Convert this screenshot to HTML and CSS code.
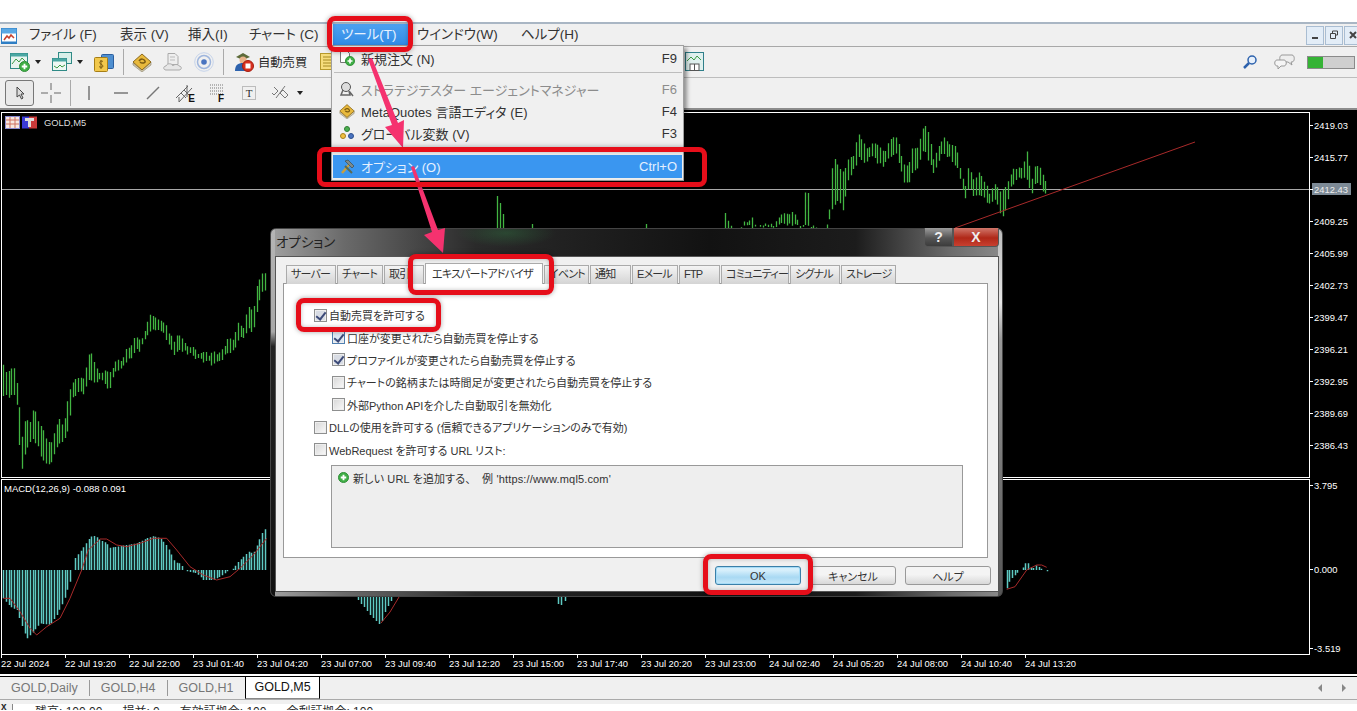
FILE: index.html

```html
<!DOCTYPE html>
<html lang="ja">
<head>
    <meta charset="UTF-8">
    <meta name="viewport" content="width=device-width, initial-scale=1.0">
    <title>MetaTrader オプション</title>
    <link rel="stylesheet" href="styles.css">
</head>
<body>
    <svg class="icon-defs" width="0" height="0">
        <symbol id="i-book" viewBox="0 0 20 20">
            <path d="M1 11l9 7 9-8v3l-9 7-9-7z" fill="#cfc7ad" stroke="#8a8268" stroke-width=".6"/>
            <path d="M1 10 10 2l9 8-9 8z" fill="#e8b93c" stroke="#8d6a1c"/>
            <path d="M7 9c2-3 5-2 6 0s-3 3-5 1" fill="none" stroke="#7a5a10" stroke-width="1.5"/>
        </symbol>
        <symbol id="i-plus" viewBox="0 0 12 12">
            <circle cx="6" cy="6" r="5.5" fill="#3fae45" stroke="#2b8a33"/>
            <path d="M6 3v6M3 6h6" stroke="#fff" stroke-width="2"/>
        </symbol>
    </svg>

    <div class="top-gap"></div>

    <nav class="menubar">
        <svg class="app-icon" width="17" height="17" viewBox="0 0 17 17">
            <rect x=".5" y=".5" width="15" height="15" fill="#fff" stroke="#2f7fc4"/>
            <rect x=".5" y=".5" width="15" height="5" fill="#5aa8e4"/>
            <rect x=".5" y="13.500" width="15" height="2" fill="#2f7fc4"/>
            <path d="M3 12l3-4 2 2 2-3 3 3" fill="none" stroke="#c8402c" stroke-width="1.5"/>
        </svg>
        <a class="menu-item">ファイル (F)</a>
        <a class="menu-item">表示 (V)</a>
        <a class="menu-item">挿入(I)</a>
        <a class="menu-item">チャート (C)</a>
        <a class="menu-item menu-item-active">ツール(T)</a>
        <a class="menu-item">ウインドウ(W)</a>
        <a class="menu-item">ヘルプ(H)</a>
        <div class="mdi-buttons">
            <span class="mdi-btn"><svg width="10" height="10" viewBox="0 0 10 10"><path d="M2 8h6" stroke="#444" stroke-width="2"/></svg></span>
            <span class="mdi-btn"><svg width="10" height="10" viewBox="0 0 10 10"><path d="M3.5 3V1h5v4H7M1.5 3.5h5v5h-5z" fill="none" stroke="#444"/></svg></span>
            <span class="mdi-btn"><svg width="10" height="10" viewBox="0 0 10 10"><path d="M2 2l6 6M8 2 2 8" stroke="#444" stroke-width="2"/></svg></span>
        </div>
    </nav>

    <div class="toolbar toolbar-top">
        <div class="tool-group">
            <div class="tool-drop">
                <svg width="20" height="20" viewBox="0 0 20 20">
                    <rect x=".5" y="1.5" width="17" height="15" fill="#e8f4f0" stroke="#2f8a86"/>
                    <rect x=".5" y="1.5" width="17" height="3" fill="#4aa7a3"/>
                    <path d="M2 12l4-5 3 3 3-4 4 4" fill="none" stroke="#3d9b45"/>
                    <use href="#i-plus" x="9" y="9" width="11" height="11"/>
                </svg>
                <i class="caret"></i>
            </div>
            <div class="tool-drop">
                <svg width="20" height="20" viewBox="0 0 20 20">
                    <rect x="6.5" y=".5" width="13" height="11" fill="#d8efe9" stroke="#2f8a86"/>
                    <rect x=".5" y="6.5" width="14" height="12" fill="#eef8f4" stroke="#2f8a86"/>
                    <rect x=".5" y="6.5" width="14" height="3" fill="#4aa7a3"/>
                    <path d="M2 14l3 2 3-3 2 2 3-2" fill="none" stroke="#3d9b45"/>
                </svg>
                <i class="caret"></i>
            </div>
            <svg width="20" height="20" viewBox="0 0 20 20">
                <rect x="7.5" y="2.5" width="12" height="14" rx="1" fill="#4f8fd0" stroke="#2c5f9e"/>
                <rect x=".5" y="5.5" width="13" height="14" rx="1" fill="#f2c84b" stroke="#a67e16"/>
                <path d="M9 9.500c-2-1-4 0-3 2 1 1 3 1 3 3-1 1-3 1-4 0M7 8v9" fill="none" stroke="#7a5a10"/>
            </svg>
        </div>
        <span class="tool-sep"></span>
        <div class="tool-group">
            <svg width="20" height="20"><use href="#i-book"/></svg>
            <svg width="20" height="20" viewBox="0 0 20 20">
                <path d="M5 1.500h7l3 3v8H5z" fill="#eee" stroke="#aaa"/>
                <path d="M7 5h5M7 8h5" stroke="#bbb"/>
                <path d="M3 18c-3 0-3-4 0-4 1-3 6-3 7 0 1-2 5-2 6 0 3 0 3 4 0 4z" fill="#e6e6e6" stroke="#aaa"/>
            </svg>
            <svg width="20" height="20" viewBox="0 0 20 20" fill="none">
                <circle cx="10" cy="10" r="9.300" stroke="#c5d3ea"/>
                <circle cx="10" cy="10" r="6.500" stroke="#9fb6dd" stroke-width="1.500"/>
                <circle cx="10" cy="10" r="2.800" fill="#4a74c0"/>
            </svg>
        </div>
        <span class="tool-sep"></span>
        <svg class="auto-icon" width="20" height="20" viewBox="0 0 20 20">
            <path d="M2 5l7-4 7 4-7 3z" fill="#5d6b3a"/>
            <circle cx="9" cy="8" r="3.500" fill="#e9b48c"/>
            <path d="M1 19c0-6 3-8 8-8s6 2 6 8z" fill="#2d62ad"/>
            <circle cx="14" cy="14" r="5.500" fill="#d8301f" stroke="#a51d10"/>
            <rect x="11.500" y="11.500" width="5" height="5" fill="#fff"/>
        </svg>
        <span class="auto-label">自動売買</span>
        <svg class="orders-icon" width="20" height="20" viewBox="0 0 20 20">
            <rect x=".5" y="1.500" width="13" height="16" fill="#f6dd7c" stroke="#b79a2c"/>
            <path d="M3 5h8M3 8h8M3 11h8M3 14h8" stroke="#a58a24"/>
        </svg>
        <svg class="layout-icon" width="20" height="20" viewBox="0 0 20 20">
            <rect x=".5" y=".5" width="18" height="18" fill="#dff0ee" stroke="#2f7f8a"/>
            <path d="M2 9l4-4 3 3 3-4 4 4" fill="none" stroke="#3d9b45"/>
            <rect x="5" y="12" width="9" height="6.500" fill="#fff" stroke="#555"/>
            <path d="M9.500 12v6.500" stroke="#555"/>
        </svg>
        <div class="tool-right">
            <svg width="16" height="16" viewBox="0 0 16 16" fill="none">
                <circle cx="10" cy="6" r="4" fill="#e7f0fb" stroke="#2d62ad" stroke-width="1.500"/>
                <path d="M7 9l-5 5" stroke="#2d62ad" stroke-width="2.500"/>
            </svg>
            <svg width="22" height="16" viewBox="0 0 22 16">
                <path d="M8 1h10c3 0 3 7 0 7h-1l1 3-4-3H8C5 8 5 1 8 1z" fill="#eee" stroke="#999"/>
                <path d="M3 6h7c3 0 3 6 0 6H7l-3 3 0-3H3C0 12 0 6 3 6z" fill="#f5f5f5" stroke="#999"/>
            </svg>
            <div class="signal-bar"><span class="signal-fill"></span></div>
        </div>
    </div>

    <div class="toolbar toolbar-draw">
        <span class="pointer-btn">
            <svg width="14" height="16" viewBox="0 0 14 16"><path d="M4 2v10l2.500-2 2 4 1.500-1-2-4h3z" fill="#dcdcdc" stroke="#444"/></svg>
        </span>
        <svg class="draw-icon" width="20" height="20" viewBox="0 0 20 20"><path d="M10 0v7M10 12v8M0 10h7M13 10h7" stroke="#666"/></svg>
        <span class="tool-sep"></span>
        <svg class="draw-icon" width="20" height="20" viewBox="0 0 20 20"><path d="M10 3v14" stroke="#777" stroke-width="1.500"/></svg>
        <svg class="draw-icon" width="20" height="20" viewBox="0 0 20 20"><path d="M3 10h14" stroke="#777" stroke-width="1.500"/></svg>
        <svg class="draw-icon" width="20" height="20" viewBox="0 0 20 20"><path d="M4 16 16 4" stroke="#777" stroke-width="1.500"/></svg>
        <span class="draw-tool">
            <svg width="20" height="20" viewBox="0 0 20 20"><path d="M1 15 13 3M4 19 17 5M9 7l5 5M6 10l5 5M12 2v12M4 14v5" fill="none" stroke="#666"/></svg>
            <b class="draw-mark">E</b>
        </span>
        <span class="draw-tool">
            <svg width="20" height="20" viewBox="0 0 20 20"><path d="M3 2h13M3 5h13M3 8h13M3 11h13" stroke="#777" stroke-dasharray="1 1"/></svg>
            <b class="draw-mark draw-mark-f">F</b>
        </span>
        <span class="draw-tool">
            <svg width="20" height="20" viewBox="0 0 20 20"><rect x="3.500" y="3.500" width="13" height="13" fill="none" stroke="#888" stroke-dasharray="1 1"/></svg>
            <b class="draw-text">T</b>
        </span>
        <svg class="draw-icon" width="20" height="20" viewBox="0 0 20 20"><path d="M3 4l4 4-4 4-2-2M9 10l5 5 3-3-5-5zM14 3l-9 12" fill="none" stroke="#777"/></svg>
        <i class="caret caret-draw"></i>
    </div>

    <main class="chart-frame">
        <section class="pane pane-price">
            <div class="plot">
                <svg id="price-plot" width="1307" height="364" viewBox="2 113 1307 364"></svg>
                <div class="chart-legend">
                    <svg width="33" height="13" viewBox="0 0 33 13">
                        <rect x=".5" y=".5" width="14" height="12" fill="#f7e8e0" stroke="#8a8ad0"/>
                        <path d="M1 4h13M1 8h13M5 1v11M10 1v11" stroke="#d07060"/>
                        <rect x="17" y=".5" width="7" height="12" fill="#3a3ad8"/>
                        <rect x="24" y=".5" width="8" height="12" fill="#c83a3a"/>
                        <path d="M20 2h9v3h-3v6h-3V5h-3z" fill="#ddd"/>
                    </svg>
                    <span>GOLD,M5</span>
                </div>
            </div>
            <div class="axis axis-price">
                <span class="axis-label">2419.03</span>
                <span class="axis-label">2415.77</span>
                <span class="axis-label axis-current">2412.43</span>
                <span class="axis-label">2409.25</span>
                <span class="axis-label">2405.99</span>
                <span class="axis-label">2402.73</span>
                <span class="axis-label">2399.47</span>
                <span class="axis-label">2396.21</span>
                <span class="axis-label">2392.95</span>
                <span class="axis-label">2389.69</span>
                <span class="axis-label">2386.43</span>
            </div>
        </section>
        <section class="pane pane-macd">
            <div class="plot">
                <svg id="macd-plot" width="1307" height="174" viewBox="2 480 1307 174"></svg>
                <div class="chart-legend macd-legend">MACD(12,26,9) -0.088 0.091</div>
            </div>
            <div class="axis axis-macd">
                <span class="axis-label">3.795</span>
                <span class="axis-label axis-zero">0.000</span>
                <span class="axis-label axis-low">-3.519</span>
            </div>
        </section>
        <div class="time-axis">
            <span class="time-label">22 Jul 2024</span>
            <span class="time-label">22 Jul 19:20</span>
            <span class="time-label">22 Jul 22:00</span>
            <span class="time-label">23 Jul 01:40</span>
            <span class="time-label">23 Jul 04:20</span>
            <span class="time-label">23 Jul 07:00</span>
            <span class="time-label">23 Jul 09:40</span>
            <span class="time-label">23 Jul 12:20</span>
            <span class="time-label">23 Jul 15:00</span>
            <span class="time-label">23 Jul 17:40</span>
            <span class="time-label">23 Jul 20:20</span>
            <span class="time-label">23 Jul 23:00</span>
            <span class="time-label">24 Jul 02:40</span>
            <span class="time-label">24 Jul 05:20</span>
            <span class="time-label">24 Jul 08:00</span>
            <span class="time-label">24 Jul 10:40</span>
            <span class="time-label">24 Jul 13:20</span>
        </div>
    </main>

    <div class="symbol-tabs">
        <span class="symbol-tab">GOLD,Daily</span>
        <span class="symbol-tab">GOLD,H4</span>
        <span class="symbol-tab symbol-tab-last">GOLD,H1</span>
        <span class="symbol-tab symbol-tab-active">GOLD,M5</span>
        <div class="tab-arrows">
            <i class="tab-arrow tab-arrow-left"></i>
            <i class="tab-arrow tab-arrow-right"></i>
        </div>
    </div>

    <footer class="status-bar">
        <span class="status-close">x</span>
        <div class="status-box">
            <span>残高: 100.00</span>
            <span>損益: 0</span>
            <span>有効証拠金: 100</span>
            <span>余剰証拠金: 100</span>
        </div>
    </footer>

    <!-- tools menu -->
    <div class="dropdown">
        <div class="dropdown-item">
            <svg width="16" height="16" viewBox="0 0 16 16">
                <path d="M1.500 1.500h7l2 2v9h-9z" fill="#fff" stroke="#777"/>
                <use href="#i-plus" x="6" y="6" width="10" height="10"/>
            </svg>
            <span class="item-label">新規注文 (N)</span><span class="item-key">F9</span>
        </div>
        <hr class="dropdown-sep">
        <div class="dropdown-item dropdown-item-off">
            <svg width="16" height="16" viewBox="0 0 16 16">
                <circle cx="7" cy="6" r="4.500" fill="#ddd" stroke="#555"/>
                <path d="M4 9l-2 5h9l-1-4M10 10l4 5" fill="none" stroke="#666" stroke-width="1.500"/>
            </svg>
            <span class="item-label">ストラテジテスター エージェントマネジャー</span><span class="item-key">F6</span>
        </div>
        <div class="dropdown-item">
            <svg width="16" height="16"><use href="#i-book"/></svg>
            <span class="item-label">MetaQuotes 言語エディタ (E)</span><span class="item-key">F4</span>
        </div>
        <div class="dropdown-item">
            <svg width="16" height="16" viewBox="0 0 16 16">
                <circle cx="8" cy="4" r="2.500" fill="#4caf50" stroke="#2f7d32"/>
                <circle cx="4" cy="11" r="2.500" fill="#f0c040" stroke="#a8801a"/>
                <circle cx="12" cy="11" r="2.500" fill="#4a74c0" stroke="#2c4f8e"/>
            </svg>
            <span class="item-label">グローバル変数 (V)</span><span class="item-key">F3</span>
        </div>
        <hr class="dropdown-sep">
        <div class="dropdown-item dropdown-item-on">
            <svg width="16" height="16" viewBox="0 0 16 16">
                <path d="M3 14 10 6" stroke="#c8a040" stroke-width="2.500"/>
                <path d="M6 2l7 7 2-2-6-6z" fill="#7d8a8c" stroke="#3e4a4c" stroke-width=".7"/>
                <path d="M13 14 6 7" stroke="#5c6a50" stroke-width="2"/>
            </svg>
            <span class="item-label">オプション (O)</span><span class="item-key">Ctrl+O</span>
        </div>
    </div>

    <!-- options dialog -->
    <div class="dialog">
        <div class="dialog-title">
            <span>オプション</span>
            <div class="caption-buttons">
                <span class="caption-btn caption-help">?</span>
                <span class="caption-btn caption-close">X</span>
            </div>
        </div>
        <div class="dialog-client">
            <div class="tabs">
                <span class="tab">サーバー</span>
                <span class="tab">チャート</span>
                <span class="tab">取引</span>
                <span class="tab tab-active">エキスパートアドバイザ</span>
                <span class="tab">イベント</span>
                <span class="tab">通知</span>
                <span class="tab">Eメール</span>
                <span class="tab">FTP</span>
                <span class="tab">コミュニティー</span>
                <span class="tab">シグナル</span>
                <span class="tab">ストレージ</span>
            </div>
            <div class="tab-panel">
                <label class="check-row"><i class="check check-on"></i>自動売買を許可する</label>
                <label class="check-row check-sub"><i class="check check-on check-focus"></i>口座が変更されたら自動売買を停止する</label>
                <label class="check-row check-sub"><i class="check check-on"></i>プロファイルが変更されたら自動売買を停止する</label>
                <label class="check-row check-sub"><i class="check"></i>チャートの銘柄または時間足が変更されたら自動売買を停止する</label>
                <label class="check-row check-sub"><i class="check"></i>外部Python APIを介した自動取引を無効化</label>
                <label class="check-row"><i class="check"></i>DLLの使用を許可する (信頼できるアプリケーションのみで有効)</label>
                <label class="check-row"><i class="check"></i>WebRequest を許可する URL リスト:</label>
                <div class="url-box">
                    <svg width="11" height="11"><use href="#i-plus"/></svg>
                    <span>新しい URL を追加する、　例 'https://www.mql5.com'</span>
                </div>
            </div>
            <div class="dialog-buttons">
                <button class="btn btn-default">OK</button>
                <button class="btn">キャンセル</button>
                <button class="btn">ヘルプ</button>
            </div>
        </div>
    </div>

    <!-- annotations drawn over the screenshot -->
    <svg class="arrows" width="1357" height="711" viewBox="0 0 1357 711">
        <polygon points="368,59 372,58 398,123 404,120 403,148 385,127 392,125"/>
        <polygon points="411,167 414,166 438,230 445,228 443,253 424,235 432,232"/>
    </svg>
    <div class="mark mark-tools"></div>
    <div class="mark mark-option"></div>
    <div class="mark mark-tab"></div>
    <div class="mark mark-auto"></div>
    <div class="mark mark-ok"></div>

    <script src="chart.js"></script>
</body>
</html>
```

FILE: styles.css

```css
* {
    box-sizing: border-box;
}
html, body {
    margin: 0;
    padding: 0;
}
body {
    width: 1357px;
    height: 711px;
    position: relative;
    overflow: hidden;
    background: #fff;
    color: #2a2a2a;
    font-family: "Liberation Sans", "Noto Sans CJK JP", sans-serif;
    font-size: 12px;
    font-feature-settings: "palt";
}
.icon-defs {
    position: absolute;
}
.top-gap {
    height: 22px;
}

/* menu bar */
.menubar {
    height: 25px;
    display: grid;
    grid-template-columns: 21px 91px 68px 61px 92px 76px 104px 100px 1fr;
    align-items: center;
    background: #f0f0f0;
    border-top: 2px solid #a9b6c4;
    border-bottom: 1px solid #a8a8a8;
    font-size: 13.5px;
}
.app-icon {
    margin: 2px 0 0 1px;
}
.menu-item {
    padding-left: 8px;
    height: 22px;
    line-height: 22px;
    color: #333;
    white-space: nowrap;
}
.menu-item-active {
    background: linear-gradient(#4ea2f0, #2f8ae6);
    color: #e6f2ff;
}
.mdi-buttons {
    display: flex;
    justify-content: flex-end;
    gap: 1px;
    margin-right: -5px;
}
.mdi-btn {
    width: 18px;
    height: 19px;
    display: flex;
    align-items: center;
    justify-content: center;
    background: #e3edf7;
    border: 1px solid #a9bdd2;
}

/* toolbars */
.toolbar {
    display: flex;
    align-items: center;
    background: #f0f0f0;
}
.toolbar-top {
    height: 31px;
    padding-left: 10px;
    border-bottom: 1px solid #bdbdbd;
}
.toolbar-draw {
    height: 32px;
    padding-left: 5px;
    border-bottom: 2px solid #8c8c8c;
}
.tool-group {
    display: flex;
    align-items: center;
    gap: 11px;
}
.tool-drop {
    display: flex;
    align-items: center;
    gap: 5px;
}
.caret {
    width: 0;
    height: 0;
    border: 3.5px solid transparent;
    border-top: 4px solid #222;
    border-bottom: 0;
}
.tool-sep {
    width: 1px;
    height: 26px;
    margin: 0 8px 0 9px;
    background: #aaa;
}
.auto-icon {
    margin-left: 2px;
}
.auto-label {
    margin-left: 4px;
    font-size: 12.3px;
}
.orders-icon {
    margin-left: 13px;
}
.layout-icon {
    margin-left: 345px;
}
.tool-right {
    margin-left: auto;
    padding-right: 2px;
    display: flex;
    align-items: center;
    gap: 16px;
}
.signal-bar {
    width: 48px;
    height: 13px;
    margin-left: -5px;
    background: #cfcfcf;
    border: 1px solid #8a8a8a;
}
.signal-fill {
    display: block;
    width: 15px;
    height: 100%;
    background: #35b335;
}
.pointer-btn {
    width: 29px;
    height: 26px;
    margin-right: 7px;
    display: flex;
    align-items: center;
    justify-content: center;
    background: #e9e9e9;
    border: 1px solid #777;
    border-radius: 3px;
}
.draw-icon,
.draw-tool {
    flex: none;
    width: 20px;
    height: 20px;
    margin-right: 12px;
}
.toolbar-draw .tool-sep {
    margin: 0 8px 0 -3px;
}
.draw-tool {
    position: relative;
}
.draw-mark {
    position: absolute;
    right: 0;
    bottom: -1px;
    font-size: 10px;
    color: #111;
}
.draw-mark-f {
    right: 3px;
}
.draw-text {
    position: absolute;
    left: 0;
    top: 0;
    width: 20px;
    line-height: 20px;
    text-align: center;
    font: 11px/20px "Liberation Serif", serif;
}
.caret-draw {
    margin-left: -6px;
}

/* chart */
.chart-frame {
    height: 566px;
    padding-top: 2px;
    background: #000;
    color: #fff;
    border-bottom: 2px solid #fff;
    font-size: 9.4px;
}
.pane {
    display: flex;
}
.pane-price {
    height: 366px;
}
.pane-macd {
    height: 176px;
    margin-top: 1px;
}
.plot {
    position: relative;
    width: 1309px;
    margin-left: 1px;
    border: 1px solid #fff;
}
.plot svg {
    display: block;
}
.chart-legend {
    position: absolute;
    left: 3px;
    top: 3px;
    display: flex;
    align-items: center;
    gap: 6px;
    color: #ddd;
}
.macd-legend {
    left: 2px;
    top: 3px;
    font-size: 9.5px;
    color: #fff;
}
.axis {
    display: flex;
    flex-direction: column;
    flex: 1;
}
.axis-price {
    margin-top: -3px;
}
.axis-price .axis-label {
    flex: none;
    height: 32px;
}
.axis-label {
    height: 12px;
    display: flex;
    align-items: center;
    gap: 1px;
    white-space: nowrap;
}
.axis-label::before {
    content: "";
    width: 3px;
    height: 1px;
    background: #fff;
}
.axis-current {
    background: linear-gradient(#000 10px, #7d8a96 10px, #7d8a96 22px, #000 22px) 2px 0 / 39px 100% no-repeat;
    color: #eee;
}
.axis-zero {
    margin-top: 72px;
}
.axis-low {
    margin-top: 67px;
}
.time-axis {
    display: flex;
    padding-left: 1px;
}
.time-label {
    flex: none;
    width: 64px;
    white-space: nowrap;
}
.time-label::before {
    content: "";
    display: block;
    width: 1px;
    height: 3px;
    background: #fff;
}

/* symbol tabs and status */
.symbol-tabs {
    height: 23px;
    display: flex;
    align-items: center;
    padding: 0 0 0 11px;
    background: #f0f0f0;
    border-top: 1px solid #000;
    font-size: 12.5px;
    color: #777;
}
.symbol-tab {
    padding-right: 11px;
    margin-right: 11px;
    border-right: 1px solid #999;
    line-height: 16px;
}
.symbol-tab-last {
    margin-right: 0;
    padding-right: 12px;
    border-right: 0;
}
.symbol-tab-active {
    height: 100%;
    margin: -1px 0 0 0;
    padding: 0 8px;
    display: flex;
    align-items: center;
    background: #fff;
    border: 1px solid #000;
    border-top: 0;
    border-bottom: 1px solid #888;
    color: #111;
}
.tab-arrows {
    margin-left: auto;
    padding-right: 11px;
    display: flex;
    gap: 20px;
}
.tab-arrow {
    border: 4px solid transparent;
}
.tab-arrow-left {
    border-right: 4px solid #888;
    border-left: 0;
}
.tab-arrow-right {
    border-left: 4px solid #888;
    border-right: 0;
}
.status-bar {
    height: 11px;
    display: flex;
    background: #f0f0f0;
    border-top: 1px solid #aaa;
    overflow: hidden;
}
.status-close {
    width: 12px;
    padding-left: 1px;
    line-height: 14px;
    font-weight: bold;
    font-size: 10px;
}
.status-box {
    flex: 1;
    margin-top: 4px;
    padding: 1px 0 0 22px;
    display: flex;
    gap: 20px;
    background: #fff;
    border-left: 1px solid #888;
    font-size: 12px;
    line-height: 14px;
    white-space: nowrap;
}

/* tools menu */
.dropdown {
    position: absolute;
    left: 331px;
    top: 45px;
    width: 353px;
    height: 136px;
    padding: 1px 1px 0;
    background: #f0f0f0;
    border: 1px solid #a0a0a0;
    box-shadow: 3px 3px 4px rgba(0, 0, 0, .4);
    font-size: 13px;
}
.dropdown-item {
    height: 22px;
    display: flex;
    align-items: center;
    padding: 0 5px 0 6px;
    color: #333;
}
.item-label {
    margin-left: 6px;
}
.item-key {
    margin-left: auto;
}
.dropdown-item-off {
    color: #8c8c8c;
}
.dropdown-sep {
    margin: 3px 0 5px 1px;
    border: 0;
    border-top: 1px solid #bdbdbd;
}
.dropdown-item-on {
    height: 23px;
    margin-top: 7px;
    background: #3a96f0;
    color: #e4f0ff;
}

/* options dialog */
.dialog {
    position: absolute;
    left: 270px;
    top: 228px;
    width: 733px;
    height: 369px;
    padding: 0 3px 5px 4px;
    border: 1px solid #444;
    border-radius: 6px;
    background:
        linear-gradient(#b5b5b5 0, #a8a8a8 28%, #222 32%, #111 100%) left top / 4px 100% no-repeat,
        linear-gradient(#bbb 0, #e6e6e6 20%, #9a9a9a 30%, #555 100%) right top / 4px 100% no-repeat,
        radial-gradient(50px 14px at 235px 4px, rgba(50, 130, 70, .35), transparent),
        linear-gradient(90deg, #a0a0a0 0, #6a6a6a 10%, #2a2a2a 28%, #121212 60%, #1c1c1c 80%, #6c6c6c 93%, #8a8a8a 100%);
}
.dialog-title {
    height: 27px;
    padding-left: 1px;
    display: flex;
    justify-content: space-between;
    color: #222;
    font-size: 13.5px;
    line-height: 27px;
}
.caption-buttons {
    display: flex;
    height: 19px;
    margin: -1px 0 0 0;
}
.caption-btn {
    display: flex;
    align-items: center;
    justify-content: center;
    font: bold 14px/1 "Liberation Sans", sans-serif;
    color: #eee;
    border: 1px solid #555;
    border-top: 0;
}
.caption-help {
    width: 29px;
    background: linear-gradient(#9c9c9c, #555 55%, #3c3c3c);
    border-radius: 0 0 0 4px;
}
.caption-close {
    width: 46px;
    background: linear-gradient(#d0766a, #b02818 55%, #c84030);
    border-radius: 0 0 4px 0;
}
.dialog-client {
    height: 336px;
    padding: 8px 10px 0 7px;
    background: #f0f0f0;
    border: 1px solid #555;
}
.tabs {
    display: grid;
    grid-template-columns: 50px 46px 40px 118px 45px 41px 46px 41px 68px 50px 55px;
    gap: 1px;
    margin-left: 3px;
    height: 18px;
    font-size: 11px;
    letter-spacing: -.8px;
}
.tab {
    padding-left: 4px;
    line-height: 17px;
    white-space: nowrap;
    color: #333;
    background: linear-gradient(#f4f4f4, #d4d4d4);
    border: 1px solid #aaa;
    border-bottom: 0;
}
.tab-active {
    position: relative;
    height: 21px;
    margin-top: -2px;
    padding-left: 6px;
    line-height: 20px;
    background: #fff;
    z-index: 1;
}
.tab-panel {
    height: 275px;
    padding: 20px 0 0 30px;
    background: #fff;
    border: 1px solid #999;
}
.check-row {
    height: 22.4px;
    display: flex;
    align-items: center;
    gap: 2px;
    font-size: 11px;
    color: #333;
    white-space: nowrap;
}
.check-sub {
    margin-left: 18px;
}
.check {
    width: 13px;
    height: 13px;
    flex: none;
    background: linear-gradient(135deg, #d6d6d6, #fafafa);
    border: 1px solid #8e8f8f;
    box-shadow: inset 0 0 0 1px #eee;
}
.check-on {
    background: #d8dce4;
    position: relative;
}
.check-on::after {
    content: "";
    position: absolute;
    left: 3px;
    top: 0;
    width: 4px;
    height: 8px;
    border: solid #3c4a78;
    border-width: 0 2px 2px 0;
    transform: rotate(38deg);
}
.check-focus {
    border-color: #4f7fb0;
    background: #dde8f4;
}
.url-box {
    width: 632px;
    height: 83px;
    margin: 4px 0 0 17px;
    padding: 4px 6px;
    display: flex;
    gap: 4px;
    align-items: center;
    align-content: flex-start;
    flex-wrap: wrap;
    background: #eee;
    border: 1px solid #999;
    font-size: 11px;
    letter-spacing: .15px;
    color: #333;
}
.dialog-buttons {
    display: flex;
    justify-content: flex-end;
    gap: 9px;
    margin: 8px -3px 0 0;
}
.btn {
    width: 86px;
    height: 19px;
    padding: 0;
    font: 11px "Liberation Sans", "Noto Sans CJK JP", sans-serif;
    font-feature-settings: "palt";
    color: #333;
    background: linear-gradient(#f4f4f4 45%, #d8d8d8);
    border: 1px solid #999;
    border-radius: 3px;
}
.btn-default {
    background: linear-gradient(#d6effb 20%, #a9d9f3 60%, #c7e8f8);
    border-color: #3a7fa8;
    box-shadow: inset 0 0 0 1px #a5dcf7;
}

/* red boxes and arrows */
.arrows {
    position: absolute;
    left: 0;
    top: 0;
    fill: #f5326f;
}
.mark {
    position: absolute;
    border: 5px solid #e60e1a;
    border-radius: 8px;
    box-shadow: 0 0 5px rgba(0, 0, 0, .35), inset 0 0 4px rgba(0, 0, 0, .25);
}
.mark-tools {
    left: 327px;
    top: 16px;
    width: 86px;
    height: 36px;
}
.mark-option {
    left: 317px;
    top: 147px;
    width: 390px;
    height: 40px;
}
.mark-tab {
    left: 408px;
    top: 254px;
    width: 146px;
    height: 41px;
}
.mark-auto {
    left: 296px;
    top: 298px;
    width: 145px;
    height: 34px;
}
.mark-ok {
    left: 703px;
    top: 554px;
    width: 110px;
    height: 41px;
}
```

FILE: chart.js

```js
// keys are [x, top, bottom], read off at 3x: page x = ox + x / 3, page y = oy + y / 3
var priceLeft = [
    [10,770,860],[25,790,860],[40,765,850],[50,820,880],[58,890,1005],[65,990,1085],[75,930,1030],
    [90,930,1000],[100,890,990],[110,920,1000],[125,950,1055],[140,985,1060],[150,1005,1070],
    [160,980,1040],[175,920,1000],[190,950,1000],[205,860,960],[215,820,870],[230,810,850],
    [250,800,850],[262,755,820],[270,718,810],[285,770,825],[300,785,805],[320,780,830],
    [330,785,830],[345,755,785],[365,750,770],[380,715,750],[395,710,750],[405,680,720],
    [420,695,720],[435,660,690],[450,610,660],[465,625,660],[480,635,655],[495,645,680],
    [510,675,720],[522,700,735],[535,670,720],[550,695,720],[565,715,730],[580,710,735],
    [595,740,750],[610,725,755],[625,735,755],[640,730,765],[655,730,750],[670,720,745],
    [685,685,725],[700,690,725],[715,635,685],[730,650,685],[745,590,650],[760,600,670],
    [772,510,590],[785,495,540],[800,495,540]
];
// the low part left of the rise mostly sits behind the dialog, tops only here and there
var priceRight = [
    [120,360,370],[128,360,370],[135,312,350],[150,345,355],[158,360,370],[182,360,370],
    [190,335,350],[215,325,350],[232,350,360],[250,340,350],[280,345,355],[300,315,345],
    [340,312,345],[362,345,355],[370,342,350],[376,250,350],[384,250,350],[392,355,365],
    [405,340,350],[414,360,370],[436,360,370],[445,320,350],
    [450,275,320],[458,142,290],[475,165,265],[490,190,300],[505,150,210],[520,140,180],
    [535,68,145],[550,100,160],[565,115,145],[580,100,135],[595,110,160],[610,130,170],
    [632,92,140],[650,80,130],[670,165,210],[685,170,225],[697,115,180],[710,125,190],
    [725,65,125],[738,42,130],[760,145,190],[775,115,150],[790,85,130],[810,105,145],
    [830,110,170],[845,200,225],[855,235,265],[865,165,230],[880,205,255],[895,190,250],
    [915,220,265],[930,250,290],[945,225,265],[965,245,318],[980,225,295],[990,190,235],
    [1005,175,210],[1025,180,205],[1040,125,210],[1055,205,250],[1068,155,210],[1085,185,240],
    [1100,215,248]
];
var macdLeft = [
    [10,370],[30,395],[50,405],[65,450],[80,492],[100,470],[120,445],[150,450],[170,420],
    [190,380],[210,320],[218,285],[225,250],[240,230],[255,210],[270,185],[285,183],[300,195],
    [320,205],[330,218],[350,215],[380,210],[410,205],[440,190],[460,183],[480,190],[495,205],
    [510,230],[525,262],[540,265],[555,285],[565,290],[590,295],[610,315],[640,315],[660,305],
    [680,290],[700,280],[715,260],[745,230],[760,235],[775,200],[790,165],[800,160]
];
var signalLeft = [
    [10,370],[30,370],[60,410],[90,460],[110,480],[140,455],[180,430],[210,370],[245,285],
    [265,225],[300,192],[320,192],[350,210],[380,215],[420,205],[460,190],[500,190],[530,225],
    [570,275],[610,300],[650,315],[690,305],[720,280],[760,240],[800,190]
];
var macdRight = [
    [20,325],[30,300],[40,290],[50,280],[65,268],[75,250],[85,250],[95,268],[110,255],[120,265],
    [130,268],[142,275]
];
var signalRight = [[20,328],[45,320],[80,270],[110,255],[125,255],[140,262]];

var STEP = 8;

function lerp(keys, x, col) {
    for (var i = 1; i < keys.length; i++) {
        if (x <= keys[i][0]) {
            var a = keys[i - 1], b = keys[i];
            return a[col] + (b[col] - a[col]) * (x - a[0]) / (b[0] - a[0]);
        }
    }
    return keys[keys.length - 1][col];
}

function jitter(n) {
    var s = Math.sin(n * 12.9898) * 43758.5453;
    return (s - Math.floor(s)) * 2 - 1;
}

function barPath(keys, ox, oy) {
    var d = '';
    var first = keys[0][0], last = keys[keys.length - 1][0];
    for (var x = first, n = 0; x <= last; x += STEP, n++) {
        var top = oy + lerp(keys, x, 1) / 3 + jitter(n) * 2;
        var bottom = oy + lerp(keys, x, 2) / 3 + jitter(n + 50) * 2;
        d += 'M' + (Math.round(ox + x / 3) + .5) + ' ' + top.toFixed(1) + 'V' + bottom.toFixed(1);
    }
    return d;
}

function histPath(keys, ox, oy, zero) {
    var d = '';
    var first = keys[0][0], last = keys[keys.length - 1][0];
    for (var x = first; x <= last; x += STEP) {
        var y = oy + lerp(keys, x, 1) / 3;
        if (Math.abs(y - zero) < 1) continue;
        d += 'M' + (Math.round(ox + x / 3) + .5) + ' ' + zero + 'V' + y.toFixed(1);
    }
    return d;
}

function linePath(keys, ox, oy) {
    return 'M' + keys.map(function(k) {
        return (ox + k[0] / 3).toFixed(1) + ' ' + (oy + k[1] / 3).toFixed(1);
    }).join('L');
}

function addPath(svg, d, color, width) {
    var p = document.createElementNS('http://www.w3.org/2000/svg', 'path');
    p.setAttribute('d', d);
    p.setAttribute('fill', 'none');
    p.setAttribute('stroke', color);
    p.setAttribute('stroke-width', width);
    svg.appendChild(p);
}

var price = document.getElementById('price-plot');
var GREEN = '#42b542';
addPath(price, 'M2 189.500H1309', '#a8a8a8', 1);
addPath(price, barPath(priceLeft, 0, 110), GREEN, 1.3);
addPath(price, barPath(priceRight, 680, 110), GREEN, 1.3);
addPath(price, 'M497.500 196V228M500.500 203V228M503.500 214V228M532.500 224V228M646.500 224V228', GREEN, 1.3);
addPath(price, 'M955 228L1195 142', '#a82a2a', 1);

var macd = document.getElementById('macd-plot');
var CYAN = '#5fcac3';
var RED = '#a82a2a';
addPath(macd, histPath(macdLeft, 0, 475, 570), CYAN, 1.5);
addPath(macd, histPath(macdRight, 1000, 480, 570), CYAN, 1.5);
addPath(macd, 'M358.500 597V600M361.500 597V604M364.500 597V607M367.500 597V611M370.500 597V615M373.500 597V618M376.500 597V621M379.500 597V624M382.500 597V621M385.500 597V612M388.500 597V606M391.500 597V601M558.500 597V604M561.500 597V605M565.500 597V601', CYAN, 1.5);
addPath(macd, linePath(signalLeft, 0, 475), RED, 1);
addPath(macd, linePath(signalRight, 1000, 480), RED, 1);
addPath(macd, 'M399 597L390 612L381 623', RED, 1);
```
